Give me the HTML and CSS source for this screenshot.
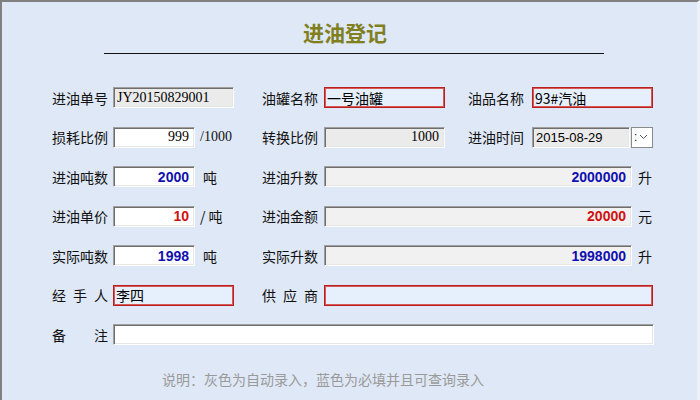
FILE: index.html
```html
<!DOCTYPE html>
<html lang="zh-CN">
<head>
    <meta charset="UTF-8">
    <title>进油登记</title>
    <link rel="stylesheet" href="styles.css">
</head>
<body>
    <div class="frame">
        <h1 class="title">进油登记</h1>
        <div class="title-line"></div>

        <div class="form">
            <div class="row">
                <div class="group g1">
                    <span class="label">进油单号</span>
                    <input class="box auto w121 serif" value="JY20150829001" readonly>
                </div>
                <div class="group g2">
                    <span class="label">油罐名称</span>
                    <input class="box must w121" value="一号油罐">
                </div>
                <div class="group g3">
                    <span class="label">油品名称</span>
                    <input class="box must w121" value="93#汽油">
                </div>
            </div>

            <div class="row">
                <div class="group g1">
                    <span class="label">损耗比例</span>
                    <input class="box plain w82 num serif" value="999">
                    <span class="unit u5 serif">/1000</span>
                </div>
                <div class="group g2">
                    <span class="label">转换比例</span>
                    <input class="box auto w121 num serif" value="1000" readonly>
                </div>
                <div class="group g3">
                    <span class="label">进油时间</span>
                    <input class="box auto w98 date" value="2015-08-29" readonly>
                    <span class="dd">
                        <span class="dd-dots">:</span>
                        <svg width="9" height="6" viewBox="0 0 9 6"><path d="M1 1 L4.5 4.5 L8 1" fill="none" stroke="#555" stroke-width="1"/></svg>
                    </span>
                </div>
            </div>

            <div class="row">
                <div class="group g1">
                    <span class="label">进油吨数</span>
                    <input class="box plain w82 num strong blue" value="2000">
                    <span class="unit u8">吨</span>
                </div>
                <div class="group g2 wide">
                    <span class="label">进油升数</span>
                    <input class="box auto2 w308 num strong blue" value="2000000" readonly>
                    <span class="unit u6">升</span>
                </div>
            </div>

            <div class="row">
                <div class="group g1">
                    <span class="label">进油单价</span>
                    <input class="box plain w82 num strong red" value="10">
                    <span class="unit u5">/ 吨</span>
                </div>
                <div class="group g2 wide">
                    <span class="label">进油金额</span>
                    <input class="box auto2 w308 num strong red" value="20000" readonly>
                    <span class="unit u6">元</span>
                </div>
            </div>

            <div class="row">
                <div class="group g1">
                    <span class="label">实际吨数</span>
                    <input class="box plain w82 num strong blue" value="1998">
                    <span class="unit u8">吨</span>
                </div>
                <div class="group g2 wide">
                    <span class="label">实际升数</span>
                    <input class="box auto2 w308 num strong blue" value="1998000" readonly>
                    <span class="unit u6">升</span>
                </div>
            </div>

            <div class="row">
                <div class="group g1">
                    <span class="label spread">经手人</span>
                    <input class="box must w121" value="李四">
                </div>
                <div class="group g2 wide">
                    <span class="label spread">供应商</span>
                    <input class="box must w329" value="">
                </div>
            </div>

            <div class="row">
                <div class="group">
                    <span class="label spread">备注</span>
                    <input class="box plain w541" value="">
                </div>
            </div>
        </div>

        <p class="note">说明：灰色为自动录入，蓝色为必填并且可查询录入</p>
    </div>
</body>
</html>
```

FILE: styles.css
```css
body {
    margin: 0;
    background: #dfe8f6;
    font-family: "Noto Sans CJK SC", sans-serif;
    font-size: 14px;
    color: #111;
}

.frame {
    width: 700px;
    height: 400px;
    box-sizing: border-box;
    border-left: 2px solid #808080;
    border-top: 2px solid #808080;
    border-right: 3px solid #eef2f8;
    background: #dfe8f6;
}

.title {
    margin: 0;
    padding-top: 18px;
    padding-right: 9px;
    height: 24px;
    line-height: 24px;
    font-size: 21px;
    font-weight: bold;
    text-align: center;
    color: #80801e;
}

.title-line {
    width: 500px;
    margin: 9px 0 0 102px;
    border-top: 1px solid #111;
}

.form {
    margin-top: 24px;
    padding-left: 50px;
}

.row {
    display: flex;
    align-items: center;
    height: 39.5px;
}

.group {
    display: flex;
    align-items: center;
}

.group > * { flex-shrink: 0; }

.g1 { width: 210px; }
.g2 { width: 206px; }
.g2.wide { width: auto; }

.label {
    width: 56px;
    margin-right: 5px;
    line-height: 20px;
    white-space: nowrap;
}

.g2 .label { margin-right: 6px; }
.g3 .label { margin-right: 8px; }

.spread {
    white-space: normal;
    text-align: justify;
    text-align-last: justify;
}

.box {
    box-sizing: border-box;
    height: 21px;
    margin: 0;
    padding: 0 3px;
    font-family: "Noto Sans CJK SC", sans-serif;
    font-size: 14px;
    color: #000;
    outline: none;
    border: 1px solid;
    border-color: #a0a0a0 #fff #fff #a0a0a0;
    box-shadow: inset 1px 1px #6e6e6e, inset -1px -1px #e6e6e6;
}

.plain { background: #fff; }
.auto { background: #ebebeb; }
.auto2 { background: #f1f1f1; }

.must {
    background: #e6f0fc;
    border: 1px solid #b82020;
    box-shadow: inset 0 0 0 1px #d85858;
    padding-left: 2px;
}

.w82 { width: 82px; }
.w98 { width: 98px; }
.w121 { width: 121px; }
.w308 { width: 308px; }
.w329 { width: 329px; }
.w541 { width: 541px; }

.serif { font-family: "Liberation Serif", serif; }
.date { font-family: "Liberation Sans", sans-serif; font-size: 13px; }

.num {
    text-align: right;
    padding-right: 5px;
}

.strong {
    font-family: "Liberation Sans", sans-serif;
    font-weight: bold;
}

.blue { color: #1010b0; }
.red { color: #d01010; }

.unit { white-space: nowrap; }
.u5 { margin-left: 5px; }
.u6 { margin-left: 6px; }
.u8 { margin-left: 8px; }

.dd {
    box-sizing: border-box;
    display: flex;
    align-items: center;
    width: 22px;
    height: 21px;
    margin-left: 1px;
    padding-left: 2px;
    background: #fff;
    border: 1px solid #8a8a8a;
}

.dd-dots {
    font-family: "Liberation Sans", sans-serif;
    font-size: 12px;
    line-height: 12px;
    margin-right: 2px;
}

.note {
    margin: 15px 0 0 160px;
    line-height: 18px;
    font-size: 14px;
    color: #9a9a9a;
}
```
